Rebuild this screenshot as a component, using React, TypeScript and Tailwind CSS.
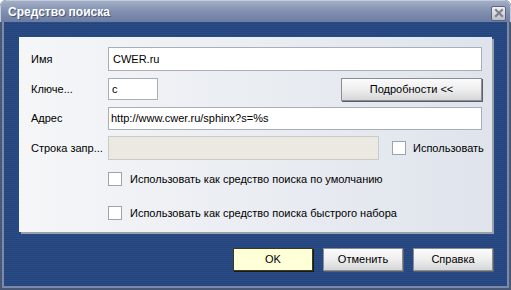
import React from "react";

const font = { fontFamily: '"Liberation Sans", Arial, sans-serif' };

function Btn({ children, className = "" }: { children: React.ReactNode; className?: string }) {
  return (
    <div
      className={`flex items-center justify-center h-[23px] border border-[#8a8d92] bg-gradient-to-b from-[#fbfbfb] via-[#eeeeee] to-[#d6d7d9] shadow-[1px_1px_0_#5a5f68] text-[11px] text-black ${className}`}
    >
      {children}
    </div>
  );
}

function Check() {
  return <div className="w-[14px] h-[14px] border border-[#9ca3ad] bg-white shrink-0" />;
}

export default function App() {
  return (
    <div style={font} className="w-[511px] h-[290px] flex flex-col bg-[#4a5878] rounded-t-[6px] overflow-hidden">
      <div className="h-[22px] flex items-center justify-between pl-[7px] pr-[4px] rounded-t-[6px] bg-gradient-to-b from-[#a3aec6] via-[#8190b0] to-[#6d7ca0] border-t border-l border-r border-[#c4cbdb]">
        <span className="text-white font-bold text-[12px] [text-shadow:1px_1px_0_#4b587a]">Средство поиска</span>
        <div className="w-[15px] h-[15px] mt-[3px] rounded-[2px] border border-[#5d667b] bg-gradient-to-b from-[#f2f3f5] to-[#b9bec8] flex items-center justify-center">
          <svg width="10" height="10" viewBox="0 0 10 10">
            <path d="M2 2 L8 8 M8 2 L2 8" stroke="#7d828d" strokeWidth="2.2" strokeLinecap="square" />
          </svg>
        </div>
      </div>
      <div className="flex-1 mx-[2px] mb-[2px] border-l-[2px] border-r-[2px] border-b-[2px] border-[#7b8aab] bg-[repeating-linear-gradient(to_bottom,#2b4c86_0px,#2b4c86_1px,#24447c_1px,#24447c_2px)] flex flex-col">
        <div className="mt-[15px] ml-[15px] w-[473px] h-[195px] bg-gradient-to-r from-[#f5f6f8] to-[#dfe4ec] shadow-[2px_2px_0_#9aa0aa] relative text-[11px] text-black">
          <div className="flex items-center h-[24px] mt-[10px]">
            <span className="w-[89px] pl-[12px]">Имя</span>
            <div className="flex-1 mr-[10px] h-[24px] bg-white border border-[#a9afb8] flex items-center px-[4px]">CWER.ru</div>
          </div>
          <div className="flex items-center h-[22px] mt-[7px]">
            <span className="w-[89px] pl-[12px]">Ключе...</span>
            <div className="w-[50px] h-[22px] bg-white border border-[#a9afb8] flex items-center px-[3px]">c</div>
            <div className="flex-1" />
            <Btn className="w-[141px] mr-[10px]">Подробности &lt;&lt;</Btn>
          </div>
          <div className="flex items-center h-[23px] mt-[7px]">
            <span className="w-[89px] pl-[12px]">Адрес</span>
            <div className="flex-1 mr-[10px] h-[23px] bg-white border border-[#a9afb8] flex items-center px-[2px]">http://www.cwer.ru/sphinx?s=%s</div>
          </div>
          <div className="flex items-center h-[24px] mt-[6px]">
            <span className="w-[89px] pl-[12px] text-black">Строка запр...</span>
            <div className="w-[271px] h-[24px] bg-[#ece9e3] border border-[#c9cbc9]" />
            <div className="ml-[13px] mt-[-1px]"><Check /></div>
            <span className="ml-[7px]">Использовать</span>
          </div>
          <div className="flex items-center mt-[11px] ml-[89px]">
            <Check />
            <span className="ml-[8px]">Использовать как средство поиска по умолчанию</span>
          </div>
          <div className="flex items-center mt-[17px] ml-[89px]">
            <Check />
            <span className="ml-[8px]">Использовать как средство поиска быстрого набора</span>
          </div>
        </div>
        <div className="flex justify-end gap-[10px] mt-[16px] mr-[14px]">
          <div className="w-[80px] h-[23px] flex items-center justify-center border border-[#3a3a1c] bg-[#ffffd8] shadow-[1px_1px_0_#1a1a10] text-[11px] text-black">OK</div>
          <Btn className="w-[80px]">Отменить</Btn>
          <Btn className="w-[80px]">Справка</Btn>
        </div>
      </div>
    </div>
  );
}
